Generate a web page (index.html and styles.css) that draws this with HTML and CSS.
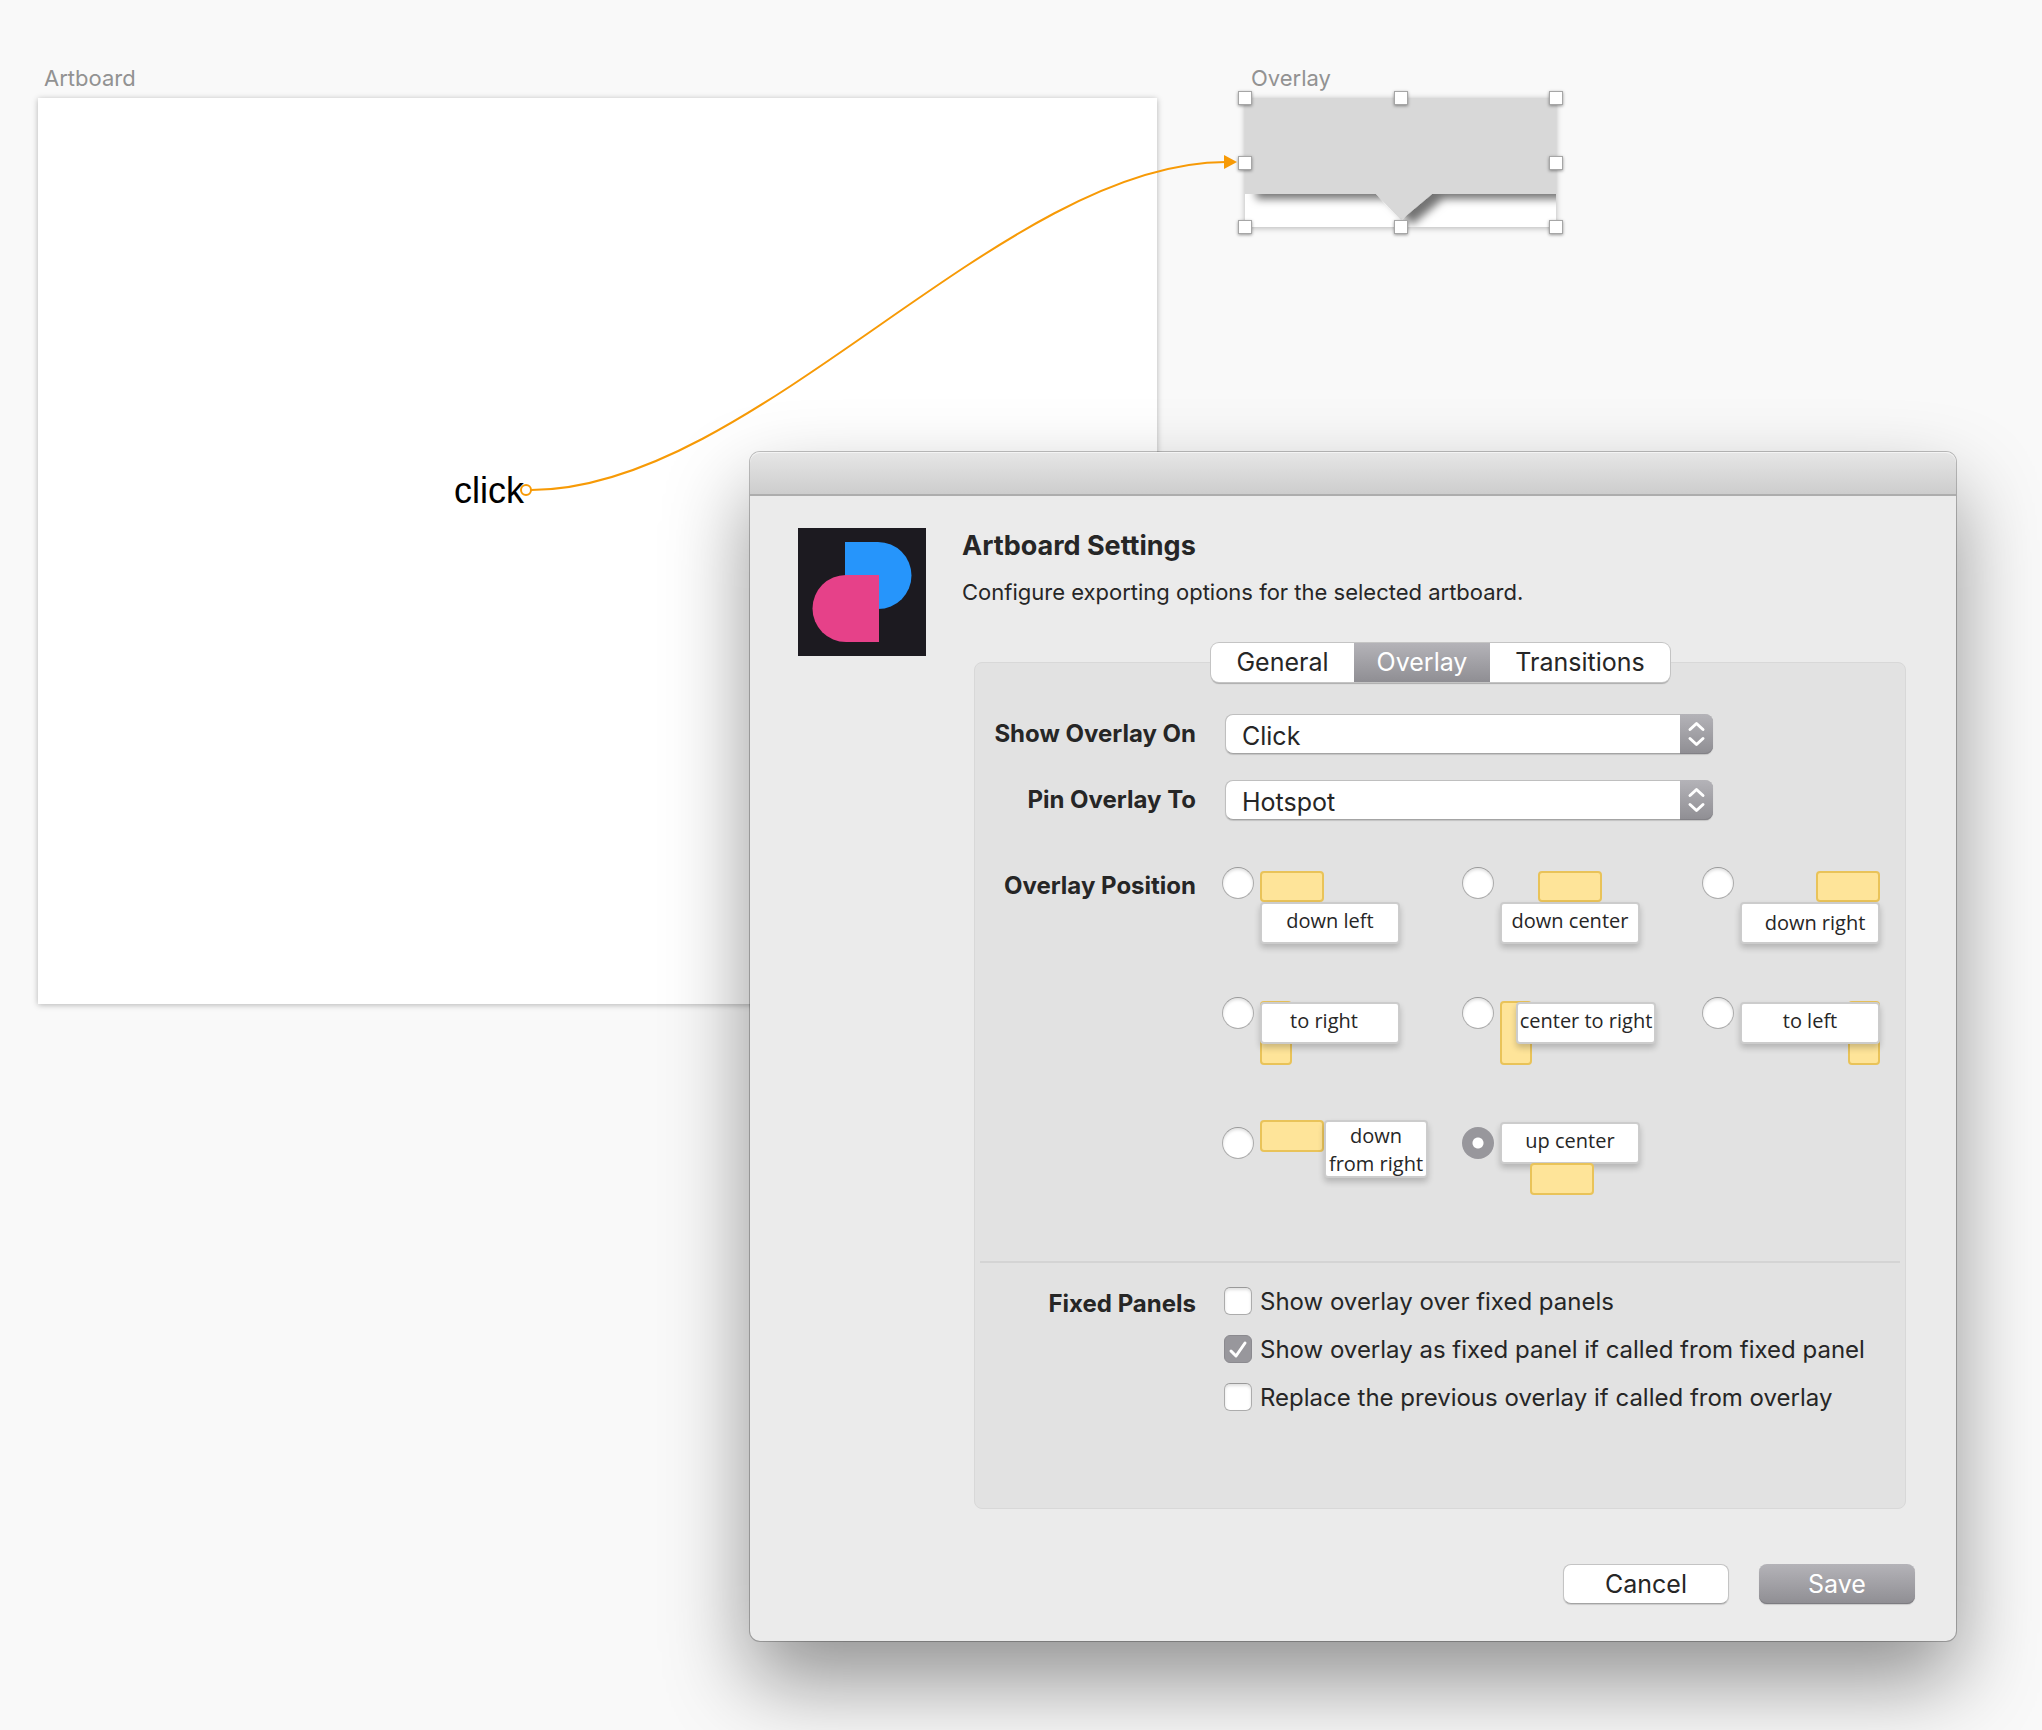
FILE: index.html
```html
<!DOCTYPE html>
<html lang="en">
<head>
  <meta charset="utf-8">
  <meta name="viewport" content="width=device-width, initial-scale=1">
  <title>Artboard Settings</title>
  <link rel="stylesheet" href="styles.css">
</head>
<body>
  <main class="canvas">
    <section class="artboard artboard--main">
      <h2 class="artboard__name">Artboard</h2>
      <div class="artboard__page">
        <span class="hotspot">click</span>
      </div>
    </section>

    <section class="artboard artboard--overlay">
      <h2 class="artboard__name">Overlay</h2>
      <div class="artboard__page">
        <svg class="bubble" viewBox="0 0 311 129" aria-hidden="true">
          <defs>
            <filter id="bubble-shadow" x="-10%" y="-10%" width="130%" height="140%">
              <feDropShadow dx="11" dy="5" stdDeviation="4" flood-color="#000" flood-opacity=".55"/>
            </filter>
          </defs>
          <path d="M0 0H311V96H187L156 122L131 96H0Z" fill="#d8d8d8" filter="url(#bubble-shadow)"/>
        </svg>
        <i class="handle handle--nw"></i><i class="handle handle--n"></i><i class="handle handle--ne"></i>
        <i class="handle handle--w"></i><i class="handle handle--e"></i>
        <i class="handle handle--sw"></i><i class="handle handle--s"></i><i class="handle handle--se"></i>
      </div>
    </section>

    <svg class="connector" viewBox="0 0 720 346" aria-hidden="true">
      <path d="M11 338C235 338 482 10 706 10" fill="none" stroke="#f79a06" stroke-width="2"/>
      <circle cx="6" cy="338" r="5" fill="#fff" stroke="#f79a06" stroke-width="2"/>
      <path d="M704 3L717 10L704 17Z" fill="#f79a06"/>
    </svg>

    <section class="dialog" role="dialog" aria-labelledby="dialog-title">
      <div class="dialog__bar"></div>
      <form class="dialog__body">
        <header class="intro">
          <svg class="logo" viewBox="0 0 128 128" aria-hidden="true">
            <path d="M0 0H128V128H0Z" fill="#1c1a20"/>
            <path d="M47 14H80A33.500 33.500 0 0 1 80 81H47Z" fill="#2695fb"/>
            <path d="M81 47H48A33.500 33.500 0 0 0 48 114H81Z" fill="#e64189"/>
          </svg>
          <div class="intro__text">
            <h1 class="intro__title" id="dialog-title">Artboard Settings</h1>
            <p class="intro__note">Configure exporting options for the selected artboard.</p>
          </div>
        </header>

        <div class="settings">
          <div class="tabs" role="tablist">
            <button class="tab" type="button" role="tab" aria-selected="false">General</button>
            <button class="tab tab--active" type="button" role="tab" aria-selected="true">Overlay</button>
            <button class="tab" type="button" role="tab" aria-selected="false">Transitions</button>
          </div>

          <div class="panel">
            <div class="row">
              <label class="row__label row__label--select" for="show-on">Show Overlay On</label>
              <div class="select">
                <select class="select__field" id="show-on"><option>Click</option></select>
                <svg class="select__arrows" viewBox="0 0 33 40" aria-hidden="true"><path d="M10 15.500L16.500 9.500L23 15.500M10 24.500L16.500 30.500L23 24.500"/></svg>
              </div>
            </div>
            <div class="row row--second">
              <label class="row__label row__label--select" for="pin-to">Pin Overlay To</label>
              <div class="select">
                <select class="select__field" id="pin-to"><option>Hotspot</option></select>
                <svg class="select__arrows" viewBox="0 0 33 40" aria-hidden="true"><path d="M10 15.500L16.500 9.500L23 15.500M10 24.500L16.500 30.500L23 24.500"/></svg>
              </div>
            </div>
            <div class="row row--position">
              <span class="row__label row__label--position" id="position-label">Overlay Position</span>
              <div class="positions" role="radiogroup" aria-labelledby="position-label">
                <label class="position">
                  <input class="radio" type="radio" name="position">
                  <span class="preview preview--down"><span class="swatch swatch--under"></span><span class="card">down left</span></span>
                </label>
                <label class="position">
                  <input class="radio" type="radio" name="position">
                  <span class="preview preview--down preview--center"><span class="swatch swatch--under"></span><span class="card">down center</span></span>
                </label>
                <label class="position">
                  <input class="radio" type="radio" name="position">
                  <span class="preview preview--down preview--end"><span class="swatch swatch--under"></span><span class="card card--right">down right</span></span>
                </label>
                <label class="position">
                  <input class="radio" type="radio" name="position">
                  <span class="preview preview--side"><span class="swatch swatch--tall"></span><span class="card card--left">to right</span></span>
                </label>
                <label class="position">
                  <input class="radio" type="radio" name="position">
                  <span class="preview preview--side preview--inset"><span class="swatch swatch--tall"></span><span class="card">center to right</span></span>
                </label>
                <label class="position">
                  <input class="radio" type="radio" name="position">
                  <span class="preview preview--side"><span class="swatch swatch--tall swatch--end"></span><span class="card">to left</span></span>
                </label>
                <label class="position position--last">
                  <input class="radio" type="radio" name="position">
                  <span class="preview preview--beside"><span class="swatch"></span><span class="card card--small">down<br>from right</span></span>
                </label>
                <label class="position position--last">
                  <input class="radio" type="radio" name="position" checked>
                  <span class="preview preview--up"><span class="card">up center</span><span class="swatch swatch--over"></span></span>
                </label>
              </div>
            </div>

            <hr class="divider">

            <div class="row">
              <span class="row__label row__label--fixed" id="fixed-label">Fixed Panels</span>
              <div class="checks" role="group" aria-labelledby="fixed-label">
                <label class="check"><input class="checkbox" type="checkbox">Show overlay over fixed panels</label>
                <label class="check"><input class="checkbox" type="checkbox" checked>Show overlay as fixed panel if called from fixed panel</label>
                <label class="check"><input class="checkbox" type="checkbox">Replace the previous overlay if called from overlay</label>
              </div>
            </div>
          </div>
        </div>

        <footer class="actions">
          <button class="button" type="button">Cancel</button>
          <button class="button button--primary" type="submit">Save</button>
        </footer>
      </form>
    </section>
  </main>
</body>
</html>
```
FILE: styles.css
```css
*,
*::before,
*::after {
  box-sizing: border-box;
}

body {
  margin: 0;
  background: #f9f9f9;
  color: #262626;
  font-family: Inter, "Liberation Sans", sans-serif;
}

h1,
h2,
p {
  margin: 0;
}

button,
select {
  font-family: inherit;
  color: inherit;
}

/* Canvas */

.canvas {
  position: relative;
  min-height: 100vh;
  overflow: hidden;
}

.artboard {
  position: absolute;
  top: 64px;
}

.artboard--main {
  left: 38px;
  width: 1119px;
}

.artboard--overlay {
  left: 1245px;
  width: 311px;
}

.artboard__name {
  margin-bottom: 6px;
  padding-left: 6px;
  color: #929292;
  font-size: 22px;
  font-weight: 400;
  line-height: 28px;
}

.artboard__page {
  position: relative;
  background: #fff;
  box-shadow: 0 1px 6px rgba(0, 0, 0, 0.28);
}

.artboard--main .artboard__page {
  height: 906px;
}

.hotspot {
  position: absolute;
  top: 373px;
  left: 416px;
  color: #000;
  font-family: "Liberation Sans", sans-serif;
  font-size: 36px;
  line-height: 40px;
}

.bubble {
  display: block;
  width: 311px;
  height: 129px;
  overflow: hidden;
}

.handle {
  position: absolute;
  width: 14px;
  height: 14px;
  margin: -7px;
  border: 1px solid #a6a6a6;
  background: #fff;
  box-shadow: 0 1px 3px rgba(0, 0, 0, 0.4);
}

.handle--nw { top: 0; left: 0; }
.handle--n { top: 0; left: 50%; }
.handle--ne { top: 0; left: 100%; }
.handle--w { top: 50%; left: 0; }
.handle--e { top: 50%; left: 100%; }
.handle--sw { top: 100%; left: 0; }
.handle--s { top: 100%; left: 50%; }
.handle--se { top: 100%; left: 100%; }

.connector {
  position: absolute;
  top: 152px;
  left: 520px;
  width: 720px;
  height: 346px;
}

/* Dialog window */

.dialog {
  position: absolute;
  top: 452px;
  left: 750px;
  width: 1206px;
  border-radius: 10px;
  background: #ebebeb;
  box-shadow: 0 0 0 1px rgba(0, 0, 0, 0.24), 0 40px 84px rgba(0, 0, 0, 0.42);
}

.dialog__bar {
  height: 44px;
  border-bottom: 2px solid #adadad;
  border-radius: 10px 10px 0 0;
  background: linear-gradient(#e6e6e6, #cdcdcd);
  box-shadow: inset 0 1px 0 #f4f4f4;
}

.dialog__body {
  padding: 32px 41px 37px 48px;
}

.intro {
  display: flex;
  gap: 36px;
  height: 128px;
}

.logo {
  flex: none;
  width: 128px;
  height: 128px;
}

.intro__text {
  padding-top: 2px;
}

.intro__title {
  margin-bottom: 16px;
  font-size: 27px;
  font-weight: 700;
  line-height: 32px;
}

.intro__note {
  font-size: 22px;
  line-height: 28px;
}

.settings {
  display: flex;
  flex-direction: column;
  align-items: center;
  margin: -13px 9px 0 176px;
}

/* Tabs */

.tabs {
  z-index: 1;
  display: grid;
  grid-template-columns: 143px 136px 180px;
  margin-left: 1px;
  border-radius: 8px;
  background: #fff;
  box-shadow: 0 0 0 1px #c4c4c4, 0 2px 1px rgba(0, 0, 0, 0.24);
}

.tab {
  height: 39px;
  padding: 0;
  border: 0;
  background: none;
  font-size: 25px;
  line-height: 39px;
}

.tab--active {
  background: linear-gradient(#b4b3b8, #8f8e93);
  color: #fff;
}

.panel {
  width: 100%;
  margin-top: -20px;
  padding: 51px 0 95px;
  border: 1px solid #d8d8d8;
  border-radius: 8px;
  background: #e2e2e2;
}

.row {
  display: grid;
  grid-template-columns: 221px 1fr;
  column-gap: 26px;
}

.row--second {
  margin-top: 26px;
}

.row--position {
  margin-top: 47px;
}

.row__label {
  font-size: 24px;
  font-weight: 700;
  text-align: right;
}

.row__label--select {
  line-height: 40px;
}

.row__label--position {
  padding-top: 5px;
  line-height: 28px;
}

.row__label--fixed {
  line-height: 34px;
}

/* Drop-downs */

.select {
  position: relative;
  width: 488px;
  height: 40px;
  margin-left: 3px;
}

.select__field {
  width: 100%;
  height: 100%;
  padding: 3px 40px 0 16px;
  border: 1px solid #bfbfbf;
  border-bottom-color: #a4a4a4;
  border-radius: 8px;
  background: #fff;
  box-shadow: 0 1px 1px rgba(0, 0, 0, 0.14);
  font-size: 25px;
  appearance: none;
}

.select__arrows {
  position: absolute;
  top: 0;
  right: 0;
  width: 33px;
  height: 40px;
  border-radius: 0 8px 8px 0;
  background: linear-gradient(#b4b3b8, #8f8e93);
  box-shadow: inset 0 -1px 0 #828186;
  fill: none;
  stroke: #fff;
  stroke-width: 3;
  stroke-linecap: round;
  stroke-linejoin: round;
  pointer-events: none;
}

/* Overlay positions */

.positions {
  display: grid;
  grid-template-columns: repeat(2, 240px) 1fr;
  grid-template-rows: 130px 123px 141px;
}

.position {
  display: flex;
  align-items: flex-start;
  gap: 6px;
}

.radio,
.checkbox {
  flex: none;
  margin: 0;
  border: 1px solid #acacac;
  border-top-color: #999;
  background: #fff;
  box-shadow: inset 0 2px 3px rgba(0, 0, 0, 0.12);
  appearance: none;
}

.radio {
  width: 32px;
  height: 32px;
  border-radius: 50%;
}

.radio:checked {
  border: 0;
  background: radial-gradient(circle, #fff 5px, #98979c 6px);
  box-shadow: none;
}

.position--last .radio {
  margin-top: 7px;
}

.preview {
  position: relative;
  display: flex;
  flex-direction: column;
  align-items: flex-start;
  width: 140px;
}

.preview--down {
  margin-top: 4px;
}

.preview--center {
  align-items: center;
}

.preview--end {
  align-items: flex-end;
}

.preview--side {
  margin-top: 5px;
}

.preview--inset {
  padding-left: 16px;
}

.preview--beside {
  flex-direction: row;
}

.preview--up {
  margin-top: 2px;
}

.swatch {
  flex: none;
  width: 64px;
  height: 32px;
  border: 2px solid #e9c359;
  border-radius: 4px;
  background: #fee499;
}

.swatch--under {
  height: 31px;
}

.swatch--over {
  z-index: 1;
  margin: -1px 0 0 30px;
}

.swatch--tall {
  position: absolute;
  top: -1px;
  left: 0;
  width: 32px;
  height: 64px;
}

.swatch--end {
  right: 0;
  left: auto;
}

.card {
  position: relative;
  flex: none;
  width: 140px;
  height: 42px;
  border: 2px solid #ccc;
  border-radius: 4px;
  background: #fff;
  box-shadow: 0 4px 6px rgba(0, 0, 0, 0.2);
  font-family: "Open Sans", "Noto Sans", sans-serif;
  font-size: 20px;
  line-height: 34px;
  text-align: center;
  white-space: nowrap;
}

.card--left {
  padding-right: 12px;
}

.card--right {
  padding-left: 10px;
  line-height: 38px;
}

.card--small {
  width: 104px;
  height: 58px;
  line-height: 28px;
}

.divider {
  height: 2px;
  margin: 0 5px 24px;
  border: 0;
  background: #d4d4d4;
}

/* Tick boxes */

.checks {
  display: flex;
  flex-direction: column;
  gap: 18px;
  margin-left: 2px;
}

.check {
  display: flex;
  gap: 8px;
  font-size: 24px;
  line-height: 30px;
  white-space: nowrap;
}

.checkbox {
  width: 28px;
  height: 28px;
  border-radius: 6px;
}

.checkbox:checked {
  border-color: #8b8a8f;
  background: #98979c url("data:image/svg+xml,%3Csvg xmlns='http://www.w3.org/2000/svg' viewBox='0 0 26 26'%3E%3Cpath d='M6 15l5 5L20 7' fill='none' stroke='%23fff' stroke-width='3' stroke-linecap='round' stroke-linejoin='round'/%3E%3C/svg%3E") center / 26px 26px no-repeat;
  box-shadow: none;
}

/* Footer buttons */

.actions {
  display: flex;
  justify-content: flex-end;
  gap: 30px;
  margin-top: 55px;
}

.button {
  width: 166px;
  height: 40px;
  padding: 0;
  border: 1px solid #c4c4c4;
  border-bottom-color: #a4a4a4;
  border-radius: 8px;
  background: #fff;
  box-shadow: 0 1px 1px rgba(0, 0, 0, 0.14);
  font-size: 25px;
}

.button--primary {
  width: 156px;
  border: 0;
  background: linear-gradient(#b4b3b8, #8f8e93);
  box-shadow: inset 0 -1px 0 #7d7c81, 0 1px 1px rgba(0, 0, 0, 0.14);
  color: #fff;
}
```
